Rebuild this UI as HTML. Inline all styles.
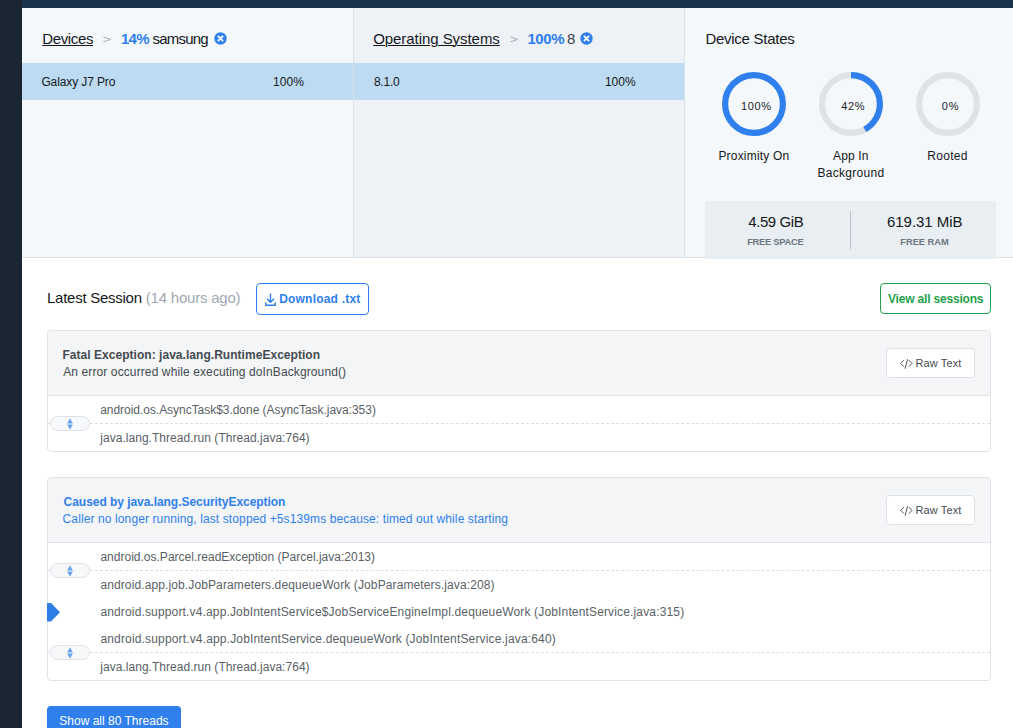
<!DOCTYPE html>
<html><head><meta charset="utf-8">
<style>
*{box-sizing:border-box;margin:0;padding:0}
html,body{width:1013px;height:728px;overflow:hidden;background:#fff;font-family:"Liberation Sans",sans-serif}
.a{position:absolute}
.t{position:absolute;white-space:nowrap;line-height:1}
.card{position:absolute;left:47px;width:944px;border:1px solid #dfe3e8;border-radius:4px;background:#fff;overflow:hidden}
.chead{position:absolute;left:0;top:0;width:100%;background:#f4f5f7;border-bottom:1px solid #dfe3e8}
.raw{position:absolute;left:886px;width:89px;height:30px;border:1px solid #dde1e6;border-radius:4px;background:#fff}
.dash{position:absolute;left:90px;width:900px;height:0;border-top:1px dashed #dcdfe4}
.pill{position:absolute;left:50px;width:40px;height:15px;border:1px solid #dfe3e8;border-radius:8px;background:#f6f8fa}
</style></head><body>

<div class="a" style="left:0;top:0;width:22px;height:728px;background:#1b2633"></div>
<div class="a" style="left:22px;top:0;width:991px;height:8px;background:#1b344c"></div>
<div class="a" style="left:22px;top:8px;width:331px;height:249px;background:#f5f8fb"></div>
<div class="a" style="left:353px;top:8px;width:1px;height:249px;background:#d9e2e8"></div>
<div class="a" style="left:354px;top:8px;width:330px;height:249px;background:#eef2f6"></div>
<div class="a" style="left:684px;top:8px;width:1px;height:249px;background:#d9e2e8"></div>
<div class="a" style="left:685px;top:8px;width:328px;height:249px;background:#f5f8fb"></div>
<div class="a" style="left:22px;top:257px;width:991px;height:1px;background:#d9e2e8"></div>
<div class="a" style="left:22px;top:63px;width:331px;height:37px;background:#bddbf2"></div>
<div class="a" style="left:354px;top:63px;width:330px;height:37px;background:#bddbf2"></div>
<svg class="a" style="left:213.5px;top:32.3px" width="13" height="13" viewBox="0 0 13 13"><circle cx="6.5" cy="6.5" r="6.2" fill="#2f80ed"/><path d="M4.4 4.4L8.6 8.6M8.6 4.4L4.4 8.6" stroke="#fff" stroke-width="1.9" stroke-linecap="round"/></svg>
<svg class="a" style="left:580.1px;top:32.3px" width="13" height="13" viewBox="0 0 13 13"><circle cx="6.5" cy="6.5" r="6.2" fill="#2f80ed"/><path d="M4.4 4.4L8.6 8.6M8.6 4.4L4.4 8.6" stroke="#fff" stroke-width="1.9" stroke-linecap="round"/></svg>
<svg class="a" style="left:102.8px;top:35.5px" width="9" height="8" viewBox="0 0 9 8"><path d="M0.4 0.9L7.6 3.4L0.4 5.9" fill="none" stroke="#a3abb5" stroke-width="1"/></svg>
<svg class="a" style="left:510.1px;top:35.5px" width="9" height="8" viewBox="0 0 9 8"><path d="M0.4 0.9L7.6 3.4L0.4 5.9" fill="none" stroke="#a3abb5" stroke-width="1"/></svg>
<svg class="a" style="left:722px;top:72.4px" width="64" height="64" viewBox="0 0 64 64"><circle cx="32" cy="32" r="28.9" fill="none" stroke="#2f80ed" stroke-width="6.2" stroke-dasharray="181.58 400" transform="rotate(-90 32 32)"/></svg>
<svg class="a" style="left:819px;top:72.4px" width="64" height="64" viewBox="0 0 64 64"><circle cx="32" cy="32" r="28.9" fill="none" stroke="#dfe3e7" stroke-width="6.2"/><circle cx="32" cy="32" r="28.9" fill="none" stroke="#2f80ed" stroke-width="6.2" stroke-dasharray="76.27 400" transform="rotate(-90 32 32)"/></svg>
<svg class="a" style="left:916px;top:72.4px" width="64" height="64" viewBox="0 0 64 64"><circle cx="32" cy="32" r="28.9" fill="none" stroke="#dfe3e7" stroke-width="6.2"/></svg>
<div class="a" style="left:705px;top:201px;width:291px;height:58px;background:#e9eef2;border-radius:3px"></div>
<div class="a" style="left:850px;top:211px;width:1px;height:38px;background:#b9c0c8"></div>

<div class="a" style="left:256px;top:283px;width:113px;height:32px;border:1px solid #2f80ed;border-radius:4px"></div>
<svg class="a" style="left:264.5px;top:292.5px" width="12" height="14" viewBox="0 0 12 14"><path d="M5.5 0.5V9.3M2 5.8L5.5 9.3L9 5.8M0.8 9.3V12.3H10.2V9.3" fill="none" stroke="#2f80ed" stroke-width="1.4"/></svg>
<div class="a" style="left:880px;top:283px;width:111px;height:31px;border:1px solid #1ea34a;border-radius:4px"></div>

<div class="card" style="top:330px;height:122px"><div class="chead" style="height:65px"></div></div>
<div class="raw" style="top:348px"></div>
<div class="dash" style="top:423px"></div>
<div class="a" style="left:48px;top:423px;width:3px;height:1px;background:#dcdfe4"></div><div class="pill" style="top:416px"></div><svg class="a" style="left:67px;top:417.5px" width="6" height="12" viewBox="0 0 6 12"><path d="M3 0.3L5.8 5.6H0.2Z M3 11.7L5.8 6.4H0.2Z" fill="#66a2ee"/></svg>

<div class="card" style="top:477px;height:204px"><div class="chead" style="height:65px"></div></div>
<div class="raw" style="top:495px"></div>
<div class="dash" style="top:570px"></div>
<div class="a" style="left:48px;top:570px;width:3px;height:1px;background:#dcdfe4"></div><div class="pill" style="top:563px"></div><svg class="a" style="left:67px;top:564.5px" width="6" height="12" viewBox="0 0 6 12"><path d="M3 0.3L5.8 5.6H0.2Z M3 11.7L5.8 6.4H0.2Z" fill="#66a2ee"/></svg>
<div class="dash" style="top:652px"></div>
<div class="a" style="left:48px;top:652px;width:3px;height:1px;background:#dcdfe4"></div><div class="pill" style="top:645px"></div><svg class="a" style="left:67px;top:646.5px" width="6" height="12" viewBox="0 0 6 12"><path d="M3 0.3L5.8 5.6H0.2Z M3 11.7L5.8 6.4H0.2Z" fill="#66a2ee"/></svg>
<svg class="a" style="left:47px;top:603px" width="14" height="19" viewBox="0 0 14 19"><path d="M0 0H4L13 9.2L4 18.4H0Z" fill="#2f7ee8"/></svg>
<div class="a" style="left:47px;top:706px;width:134px;height:30px;background:#2f80ed;border-radius:4px"></div>

<svg class="a" style="left:899.5px;top:359px" width="14" height="11" viewBox="0 0 14 11"><path d="M3.9 1.2L0.7 4.4L3.9 7.6M8.9 1.2L12.1 4.4L8.9 7.6M7.5 0.2L5.1 9.8" fill="none" stroke="#50555c" stroke-width="1"/></svg>
<svg class="a" style="left:899.5px;top:506px" width="14" height="11" viewBox="0 0 14 11"><path d="M3.9 1.2L0.7 4.4L3.9 7.6M8.9 1.2L12.1 4.4L8.9 7.6M7.5 0.2L5.1 9.8" fill="none" stroke="#50555c" stroke-width="1"/></svg>
<div class="t" style="left:42.3px;top:31.0px;font-size:15px;font-weight:400;color:#15181c;letter-spacing:-0.367px;text-decoration:underline;text-decoration-thickness:1px;text-underline-offset:0.5px;">Devices</div>
<div class="t" style="left:121.0px;top:31.0px;font-size:15px;font-weight:700;color:#2f80ed;letter-spacing:-0.75px;">14%</div>
<div class="t" style="left:152.5px;top:31.0px;font-size:15px;font-weight:400;color:#15181c;letter-spacing:-0.783px;">samsung</div>
<div class="t" style="left:41.4px;top:76.0px;font-size:12px;font-weight:400;color:#15181c;letter-spacing:-0.117px;">Galaxy J7 Pro</div>
<div class="t" style="left:272.9px;top:76.0px;font-size:12px;font-weight:400;color:#15181c;letter-spacing:0.133px;">100%</div>
<div class="t" style="left:373.2px;top:31.0px;font-size:15px;font-weight:400;color:#15181c;letter-spacing:-0.056px;text-decoration:underline;text-decoration-thickness:1px;text-underline-offset:0.5px;">Operating Systems</div>
<div class="t" style="left:527.4px;top:31.0px;font-size:15px;font-weight:700;color:#2f80ed;letter-spacing:-0.4px;">100%</div>
<div class="t" style="left:566.9px;top:31.0px;font-size:15px;font-weight:400;color:#3a3e44;letter-spacing:0.0px;">8</div>
<div class="t" style="left:373.9px;top:76.0px;font-size:12px;font-weight:400;color:#15181c;letter-spacing:-0.2px;">8.1.0</div>
<div class="t" style="left:604.9px;top:76.0px;font-size:12px;font-weight:400;color:#15181c;letter-spacing:0.033px;">100%</div>
<div class="t" style="left:705.4px;top:31.0px;font-size:15px;font-weight:400;color:#15181c;letter-spacing:-0.258px;">Device States</div>
<div class="t" style="left:740.9px;top:101.0px;font-size:11px;font-weight:400;color:#202326;letter-spacing:0.633px;">100%</div>
<div class="t" style="left:841.2px;top:101.0px;font-size:11px;font-weight:400;color:#202326;letter-spacing:0.7px;">42%</div>
<div class="t" style="left:941.7px;top:101.0px;font-size:11px;font-weight:400;color:#202326;letter-spacing:0.9px;">0%</div>
<div class="t" style="left:718.4px;top:150.0px;font-size:12px;font-weight:400;color:#15181c;letter-spacing:0.2px;">Proximity On</div>
<div class="t" style="left:833.0px;top:150.0px;font-size:12px;font-weight:400;color:#15181c;letter-spacing:0.16px;">App In</div>
<div class="t" style="left:817.4px;top:166.5px;font-size:12px;font-weight:400;color:#15181c;letter-spacing:0.311px;">Background</div>
<div class="t" style="left:927.3px;top:150.0px;font-size:12px;font-weight:400;color:#15181c;letter-spacing:0.3px;">Rooted</div>
<div class="t" style="left:748.2px;top:214.0px;font-size:15px;font-weight:400;color:#15181c;letter-spacing:-0.4px;">4.59 GiB</div>
<div class="t" style="left:747.2px;top:237.7px;font-size:9.3px;font-weight:700;color:#6c7580;letter-spacing:-0.256px;">FREE SPACE</div>
<div class="t" style="left:887.0px;top:214.0px;font-size:15px;font-weight:400;color:#15181c;letter-spacing:-0.044px;">619.31 MiB</div>
<div class="t" style="left:900.3px;top:237.7px;font-size:9.3px;font-weight:700;color:#6c7580;letter-spacing:-0.014px;">FREE RAM</div>
<div class="t" style="left:47.0px;top:290.0px;font-size:15px;font-weight:400;color:#15181c;letter-spacing:-0.262px;">Latest Session</div>
<div class="t" style="left:145.8px;top:290.0px;font-size:15px;font-weight:400;color:#a0a8b3;letter-spacing:-0.215px;">(14 hours ago)</div>
<div class="t" style="left:279.2px;top:292.7px;font-size:12px;font-weight:700;color:#2f80ed;letter-spacing:0.2px;">Download .txt</div>
<div class="t" style="left:888.0px;top:292.7px;font-size:12px;font-weight:700;color:#1ea34a;letter-spacing:-0.188px;">View all sessions</div>
<div class="t" style="left:62.4px;top:349.0px;font-size:12px;font-weight:700;color:#454a50;letter-spacing:0.038px;">Fatal Exception: java.lang.RuntimeException</div>
<div class="t" style="left:63.2px;top:365.5px;font-size:12px;font-weight:400;color:#454a50;letter-spacing:0.11px;">An error occurred while executing doInBackground()</div>
<div class="t" style="left:915.4px;top:358.0px;font-size:11px;font-weight:400;color:#454a50;letter-spacing:0.129px;">Raw Text</div>
<div class="t" style="left:100.2px;top:403.5px;font-size:12px;font-weight:400;color:#5a5f66;letter-spacing:-0.038px;">android.os.AsyncTask$3.done (AsyncTask.java:353)</div>
<div class="t" style="left:100.3px;top:432.0px;font-size:12px;font-weight:400;color:#5a5f66;letter-spacing:0.032px;">java.lang.Thread.run (Thread.java:764)</div>
<div class="t" style="left:63.6px;top:496.0px;font-size:12px;font-weight:700;color:#2f80ed;letter-spacing:-0.044px;">Caused by java.lang.SecurityException</div>
<div class="t" style="left:62.6px;top:512.5px;font-size:12px;font-weight:400;color:#2f80ed;letter-spacing:0.11px;">Caller no longer running, last stopped +5s139ms because: timed out while starting</div>
<div class="t" style="left:915.4px;top:505.0px;font-size:11px;font-weight:400;color:#454a50;letter-spacing:0.129px;">Raw Text</div>
<div class="t" style="left:100.4px;top:551.3px;font-size:12px;font-weight:400;color:#5a5f66;letter-spacing:0.01px;">android.os.Parcel.readException (Parcel.java:2013)</div>
<div class="t" style="left:100.4px;top:579.0px;font-size:12px;font-weight:400;color:#5a5f66;letter-spacing:0.115px;">android.app.job.JobParameters.dequeueWork (JobParameters.java:208)</div>
<div class="t" style="left:100.4px;top:606.2px;font-size:12px;font-weight:400;color:#5a5f66;letter-spacing:0.151px;">android.support.v4.app.JobIntentService$JobServiceEngineImpl.dequeueWork (JobIntentService.java:315)</div>
<div class="t" style="left:100.4px;top:633.2px;font-size:12px;font-weight:400;color:#5a5f66;letter-spacing:0.162px;">android.support.v4.app.JobIntentService.dequeueWork (JobIntentService.java:640)</div>
<div class="t" style="left:100.3px;top:660.7px;font-size:12px;font-weight:400;color:#5a5f66;letter-spacing:0.032px;">java.lang.Thread.run (Thread.java:764)</div>
<div class="t" style="left:59.3px;top:715.0px;font-size:12px;font-weight:400;color:#ffffff;letter-spacing:0.006px;">Show all 80 Threads</div>
</body></html>
